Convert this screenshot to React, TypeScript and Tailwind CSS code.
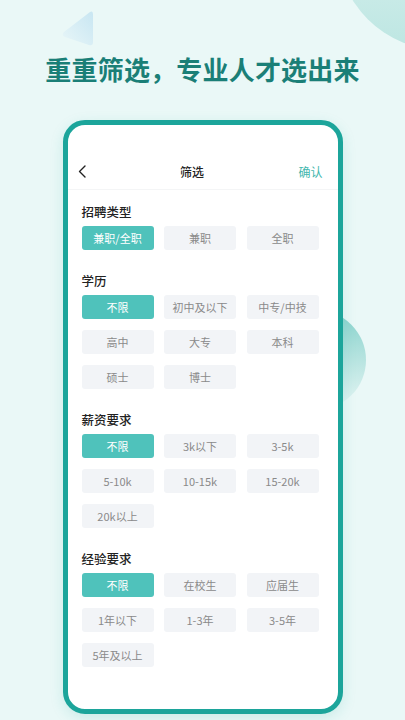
import React from "react";

const font = { fontFamily: '"Noto Sans CJK SC", "Noto Sans", sans-serif' };

type Section = { title: string; options: string[] };

const sections: Section[] = [
  { title: "招聘类型", options: ["兼职/全职", "兼职", "全职"] },
  { title: "学历", options: ["不限", "初中及以下", "中专/中技", "高中", "大专", "本科", "硕士", "博士"] },
  { title: "薪资要求", options: ["不限", "3k以下", "3-5k", "5-10k", "10-15k", "15-20k", "20k以上"] },
  { title: "经验要求", options: ["不限", "在校生", "应届生", "1年以下", "1-3年", "3-5年", "5年及以上"] },
];

export default function App() {
  return (
    <div
      className="relative w-[405px] h-[720px] overflow-hidden bg-[#eaf8f7] flex flex-col items-center"
      style={font}
    >
      {/* decorations */}
      <svg className="absolute left-[60px] top-[9px]" width="36" height="38" viewBox="0 0 36 38">
        <defs>
          <linearGradient id="tri" x1="1" y1="0" x2="0" y2="1">
            <stop offset="0" stopColor="#c8e6f2" />
            <stop offset="1" stopColor="#e8f6f8" />
          </linearGradient>
        </defs>
        <path d="M30 3 Q33 1 33 6 L33 33 Q33 37 29 36 L5 28 Q1 26 4 23 Z" fill="url(#tri)" />
      </svg>
      <div className="absolute left-[337px] top-[-160px] w-[210px] h-[210px] rounded-full bg-gradient-to-b from-[#e8f7f6] to-[#bde6e2]" />
      <div className="absolute left-[266px] top-[310px] w-[100px] h-[100px] rounded-full bg-gradient-to-b from-[#86d2cc] to-[#e6f6f5]" />

      <h1 className="relative mt-[51px] text-[26px] leading-[36px] font-bold text-[#1a7f77] tracking-[0.2px]">
        重重筛选，专业人才选出来
      </h1>

      <div className="relative mt-[33px] w-[280px] h-[594px] rounded-[22px] border-[5px] border-[#1ca59b] bg-white shadow-[0_4px_14px_rgba(28,165,155,0.15)] overflow-hidden">
        <div className="mt-[29px] h-[36px] flex items-center justify-between pl-[10px] pr-[15px] border-b border-[#f4f5f6]">
          <svg width="8" height="13" viewBox="0 0 8 13">
            <path d="M7 1 L1.5 6.5 L7 12" fill="none" stroke="#222" strokeWidth="1.4" strokeLinecap="round" strokeLinejoin="round" />
          </svg>
          <span className="text-[12px] text-[#222] font-medium">筛选</span>
          <span className="text-[12px] text-[#3fb7ae]">确认</span>
        </div>

        <div className="pl-[14px] pt-[12px] flex flex-col gap-[21px]">
          {sections.map((s) => (
            <div key={s.title} className="flex flex-col">
              <div className="text-[12.5px] leading-[20px] text-[#222] font-medium">{s.title}</div>
              <div className="mt-[4px] grid grid-cols-[repeat(3,72px)] gap-x-[10.5px] gap-y-[11px]">
                {s.options.map((o, i) => (
                  <div
                    key={o}
                    className={
                      i === 0
                        ? "h-[24px] rounded-[3px] bg-[#4fc2bb] text-white text-[11px] flex items-center justify-center"
                        : "h-[24px] rounded-[3px] bg-[#f2f4f7] text-[#8a8a8a] text-[11px] flex items-center justify-center"
                    }
                  >
                    {o}
                  </div>
                ))}
              </div>
            </div>
          ))}
        </div>
      </div>
    </div>
  );
}
